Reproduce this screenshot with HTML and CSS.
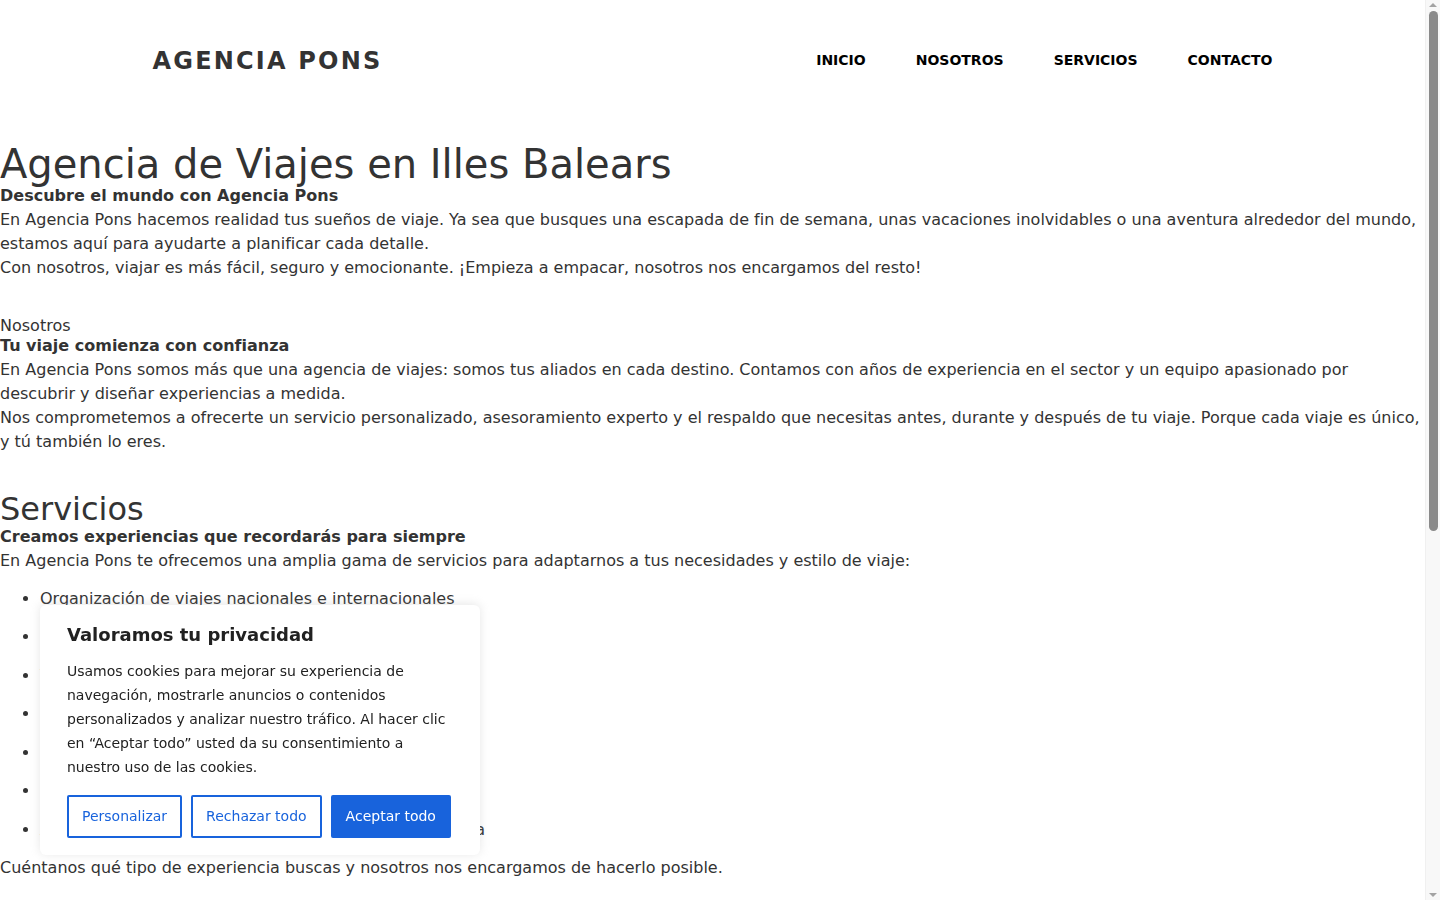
FILE: index.html
```html
<!DOCTYPE html>
<html lang="es">
<head>
<meta charset="utf-8">
<title>Agencia Pons</title>
<link rel="stylesheet" href="styles.css">
</head>
<body>
<header class="site-header">
  <div class="header-inner">
    <a class="logo" href="#">AGENCIA PONS</a>
    <nav class="main-nav">
      <a href="#">INICIO</a>
      <a href="#">NOSOTROS</a>
      <a href="#">SERVICIOS</a>
      <a href="#">CONTACTO</a>
    </nav>
  </div>
</header>

<main class="content">
  <section class="hero">
    <h1 class="page-title">Agencia de Viajes en Illes Balears</h1>
    <h3 class="subtitle">Descubre el mundo con Agencia Pons</h3>
    <p class="text">En Agencia Pons hacemos realidad tus sueños de viaje. Ya sea que busques una escapada de fin de semana, unas vacaciones inolvidables o una aventura alrededor del mundo, estamos aquí para ayudarte a planificar cada detalle.</p>
    <p class="text">Con nosotros, viajar es más fácil, seguro y emocionante. ¡Empieza a empacar, nosotros nos encargamos del resto!</p>
  </section>

  <section class="block block-about">
    <h2 class="small-title">Nosotros</h2>
    <h3 class="subtitle">Tu viaje comienza con confianza</h3>
    <p class="text">En Agencia Pons somos más que una agencia de viajes: somos tus aliados en cada destino. Contamos con años de experiencia en el sector y un equipo apasionado por descubrir y diseñar experiencias a medida.</p>
    <p class="text">Nos comprometemos a ofrecerte un servicio personalizado, asesoramiento experto y el respaldo que necesitas antes, durante y después de tu viaje. Porque cada viaje es único, y tú también lo eres.</p>
  </section>

  <section class="block block-services">
    <h2 class="section-title">Servicios</h2>
    <h3 class="subtitle">Creamos experiencias que recordarás para siempre</h3>
    <p class="text">En Agencia Pons te ofrecemos una amplia gama de servicios para adaptarnos a tus necesidades y estilo de viaje:</p>
    <ul class="service-list">
      <li>Organización de viajes nacionales e internacionales</li>
      <li>Paquetes vacacionales a medida</li>
      <li>Viajes de novios y escapadas románticas</li>
      <li>Circuitos culturales y de aventura</li>
      <li>Cruceros por el Mediterráneo</li>
      <li>Reservas de vuelos, hoteles y traslados</li>
      <li>Asesoramiento personalizado y atención en cada etapa</li>
    </ul>
    <p class="text">Cuéntanos qué tipo de experiencia buscas y nosotros nos encargamos de hacerlo posible.</p>
  </section>

  <section class="block block-contact">
    <h2 class="section-title">Contacto</h2>
    <h3 class="subtitle">Hablemos de tu próximo viaje</h3>
    <p class="text">Visítanos en nuestra oficina o escríbenos y te responderemos lo antes posible.</p>
    <p class="text">Teléfono: 971 000 000</p>
    <p class="text">Email: info@agenciapons.com</p>
    <p class="text">Palma, Illes Balears</p>
  </section>
</main>

<footer class="site-footer">
  <p>© 2024 Agencia Pons. Todos los derechos reservados.</p>
</footer>

<div class="cookie-banner">
  <p class="cookie-title">Valoramos tu privacidad</p>
  <p class="cookie-text">Usamos cookies para mejorar su experiencia de navegación, mostrarle anuncios o contenidos personalizados y analizar nuestro tráfico. Al hacer clic en “Aceptar todo” usted da su consentimiento a nuestro uso de las cookies.</p>
  <div class="cookie-buttons">
    <button class="cookie-btn cookie-btn-outline">Personalizar</button>
    <button class="cookie-btn cookie-btn-outline">Rechazar todo</button>
    <button class="cookie-btn cookie-btn-solid">Aceptar todo</button>
  </div>
</div>

<div class="scrollbar" aria-hidden="true">
  <span class="scroll-arrow scroll-arrow-up"></span>
  <span class="scroll-thumb"></span>
  <span class="scroll-arrow scroll-arrow-down"></span>
</div>
</body>
</html>
```

FILE: styles.css
```css
body {
  margin: 0 15px 0 0;
  font-family: "DejaVu Sans", sans-serif;
  font-size: 16px;
  line-height: 24px;
  color: #333333;
  background: #ffffff;
}

.site-header {
  height: 120px;
}

.header-inner {
  box-sizing: border-box;
  max-width: 1140px;
  height: 100%;
  margin: 0 auto;
  padding: 0 10px;
  display: flex;
  align-items: center;
  justify-content: space-between;
}

.logo {
  padding-top: 2px;
  font-size: 24px;
  font-weight: bold;
  letter-spacing: 2.2px;
  color: #333333;
  text-decoration: none;
}

.main-nav {
  display: flex;
  gap: 50px;
}

.main-nav a {
  font-size: 14px;
  font-weight: bold;
  color: #000000;
  text-decoration: none;
}

.content {
  padding-top: 24px;
}

.page-title {
  margin: 0;
  font-size: 40px;
  line-height: 40px;
  font-weight: normal;
}

.subtitle {
  margin: 0;
  font-size: 16px;
  line-height: 24px;
  font-weight: bold;
}

.text {
  margin: 0;
}

.block {
  padding-top: 38px;
}

.block-services {
  padding-top: 39px;
}

.small-title {
  margin: 0;
  font-size: 16px;
  line-height: 16px;
  font-weight: normal;
}

.section-title {
  margin: 0;
  font-size: 32px;
  line-height: 32px;
  font-weight: normal;
}

.service-list {
  margin: 14px 0 0;
  padding-left: 40px;
}

.service-list li {
  margin-bottom: 14.45px;
}

.block-contact {
  padding-bottom: 330px;
}

.site-footer {
  padding: 40px 0;
  text-align: center;
  font-size: 14px;
  border-top: 1px solid #eeeeee;
}

.site-footer p {
  margin: 0;
}

.cookie-banner {
  position: fixed;
  left: 40px;
  bottom: 45px;
  width: 440px;
  box-sizing: border-box;
  padding: 18px 26px 17px 27px;
  background: #ffffff;
  border-radius: 6px;
  box-shadow: 0 -1px 10px 0 rgba(172, 171, 171, 0.3);
  color: #212121;
}

.cookie-title {
  margin: 0 0 12px;
  font-size: 18px;
  line-height: 24px;
  font-weight: bold;
}

.cookie-text {
  margin: 0;
  font-size: 14px;
  line-height: 24px;
}

.cookie-buttons {
  display: flex;
  gap: 9px;
  margin-top: 16px;
}

.cookie-btn {
  font-family: "DejaVu Sans", sans-serif;
  font-size: 14px;
  line-height: 23px;
  padding: 8px 13px;
  border: 2px solid #1863dc;
  border-radius: 2px;
  cursor: pointer;
}

.cookie-btn-outline {
  background: #ffffff;
  color: #1863dc;
}

.cookie-btn-solid {
  background: #1863dc;
  color: #ffffff;
}

/* simulated classic scrollbar drawn over the right edge */
.scrollbar {
  position: fixed;
  top: 0;
  right: 0;
  width: 15px;
  height: 100vh;
  background: #f8f8f8;
  border-left: 1px solid #f0f0f0;
  box-sizing: border-box;
}

.scroll-thumb {
  position: absolute;
  top: 11px;
  left: 3px;
  width: 9px;
  height: 520px;
  border-radius: 5px;
  background: #8a8a8a;
}

.scroll-arrow {
  position: absolute;
  left: 3px;
  width: 0;
  height: 0;
  border-left: 4px solid transparent;
  border-right: 4px solid transparent;
}

.scroll-arrow-up {
  top: 3px;
  border-bottom: 4px solid #a3a3a3;
}

.scroll-arrow-down {
  bottom: 3px;
  border-top: 4px solid #a3a3a3;
}
```
